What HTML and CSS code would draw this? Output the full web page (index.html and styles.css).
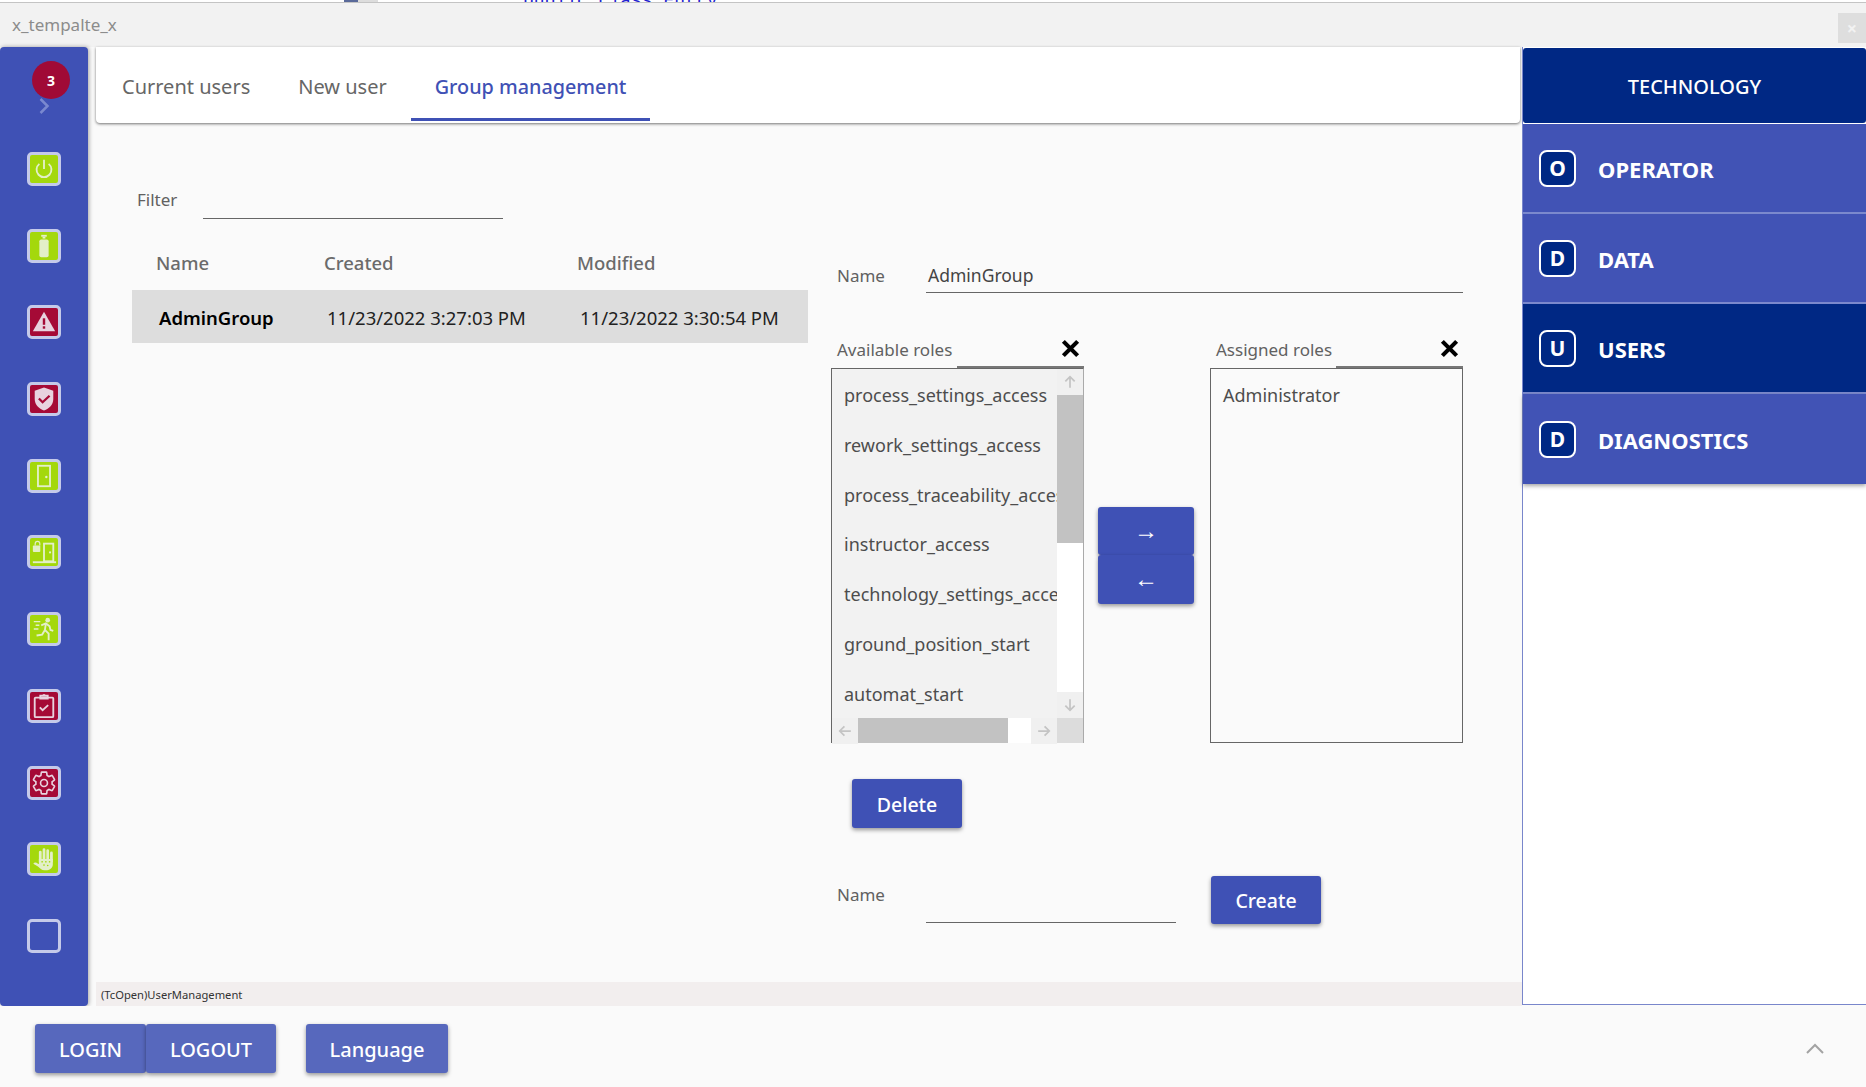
FILE: index.html
```html
<!DOCTYPE html>
<html lang="en">
<head>
  <meta charset="UTF-8" />
  <title>x_tempalte_x</title>
  <link rel="stylesheet" href="styles.css">
</head>
<body>
  <!-- Editor window peeking out behind the app -->
  <div class="behind-strip">
    <span class="behind-dark"></span><span class="behind-light"></span>
    <span class="behind-code">public class Entry</span>
  </div>

  <div class="title-bar">
    <span class="title-text">x_tempalte_x</span>
    <span class="close-btn">&times;</span>
  </div>

  <div class="workspace">
    <!-- Left icon rail -->
    <aside class="side-rail">
      <div class="alarm-badge">3</div>
      <svg class="rail-chevron" viewBox="0 0 14 18"><path d="M3.500 2l7 7-7 7" /></svg>
      <div class="rail-icons">
        <div class="rail-icon green">
          <svg viewBox="0 0 28 28" class="line"><path d="M9 8.500a8 8 0 1 0 10 0" /><path d="M14 4v10" /></svg>
        </div>
        <div class="rail-icon green">
          <svg viewBox="0 0 28 28" class="solid"><rect x="11" y="2" width="6" height="2" /><rect x="12.500" y="4" width="3" height="2" /><path d="M11 7h6a2 2 0 0 1 2 2v15a2 2 0 0 1-2 2h-6a2 2 0 0 1-2-2V9a2 2 0 0 1 2-2z" /></svg>
        </div>
        <div class="rail-icon red">
          <svg viewBox="0 0 28 28" class="solid"><path d="M14 3l12 21H2z" /><rect class="cut" x="12.700" y="10" width="2.600" height="7" /><rect class="cut" x="12.700" y="18.600" width="2.600" height="2.600" /></svg>
        </div>
        <div class="rail-icon red">
          <svg viewBox="0 0 28 28" class="solid"><path d="M14 1.500l10 3.500v9c0 6-4.500 10.500-10 12.500C8.500 24.500 4 20 4 14V5z" /><path class="cut-line" d="M8.500 13.500l4 4 7.500-7" /></svg>
        </div>
        <div class="rail-icon green">
          <svg viewBox="0 0 28 28" class="line"><rect x="7.500" y="3" width="13" height="22" /><circle class="knob" cx="16.500" cy="15" r="1.300" /></svg>
        </div>
        <div class="rail-icon green">
          <svg viewBox="0 0 28 28" class="line"><rect x="14" y="5" width="10" height="19" /><circle class="knob" cx="20.500" cy="14.500" r="1.200" /><path d="M2 25h25" /><path d="M4.500 7V5a2.500 2.500 0 0 1 5 0v2" stroke-width="1.300" /><rect class="knob" x="2" y="7" width="8" height="7" rx="1" /></svg>
        </div>
        <div class="rail-icon green">
          <svg viewBox="0 0 28 28" class="line"><circle class="knob" cx="18" cy="4.500" r="2.500" /><path d="M11 10l5-2 4 3 1 4 3 1M16 8l-1 7 4 4v7M15 15l-3 5-6 1" /><path d="M3 6h7M5 10h4M3 14h5" stroke-width="1.500" /></svg>
        </div>
        <div class="rail-icon red">
          <svg viewBox="0 0 28 28" class="line"><rect x="4" y="5" width="20" height="21" rx="1" /><path d="M10 5V3h3a1 1 0 0 1 2 0h3v3h-8z" /><path d="M9.500 15.500l3 3 6-5.500" /></svg>
        </div>
        <div class="rail-icon red">
          <svg viewBox="0 0 24 24" class="line thin"><path d="M19.430 12.980c.04-.32.07-.64.07-.98s-.03-.66-.07-.98l2.110-1.650c.19-.15.24-.42.12-.64l-2-3.460c-.12-.22-.39-.3-.61-.22l-2.490 1c-.52-.4-1.080-.73-1.690-.98l-.38-2.650C14.460 2.180 14.250 2 14 2h-4c-.25 0-.46.18-.49.42l-.38 2.650c-.61.25-1.170.59-1.690.98l-2.490-1c-.23-.09-.49 0-.61.22l-2 3.460c-.13.22-.07.49.12.64l2.110 1.650c-.04.32-.07.65-.07.98s.03.66.07.98l-2.110 1.650c-.19.15-.24.42-.12.64l2 3.460c.12.22.39.3.61.22l2.490-1c.52.4 1.080.73 1.690.98l.38 2.650c.03.24.24.42.49.42h4c.25 0 .46-.18.49-.42l.38-2.650c.61-.25 1.170-.59 1.690-.98l2.490 1c.23.09.49 0 .61-.22l2-3.460c.12-.22.07-.49-.12-.64z" /><circle cx="12" cy="12" r="3.200" /></svg>
        </div>
        <div class="rail-icon green">
          <svg viewBox="0 0 28 28" class="solid"><rect x="8.500" y="5" width="3" height="13" rx="1.500" /><rect x="12.500" y="2.500" width="3" height="15" rx="1.500" /><rect x="16.500" y="3.500" width="3" height="14" rx="1.500" /><rect x="20.500" y="6" width="3" height="12" rx="1.500" /><path d="M8.500 14h15v6c0 3-2.500 6-6 6h-3c-3 0-5-2-7-4l-5-3c1-1.500 3-1.500 5 0l1 .5z" /><circle class="cut" cx="12" cy="17" r=".9" /><circle class="cut" cx="16" cy="17" r=".9" /><circle class="cut" cx="20" cy="17" r=".9" /><circle class="cut" cx="14" cy="20.500" r=".9" /><circle class="cut" cx="18" cy="21" r=".9" /></svg>
        </div>
        <div class="rail-icon"></div>
      </div>
    </aside>

    <main class="main">
      <nav class="tabs">
        <div class="tab">Current users</div>
        <div class="tab">New user</div>
        <div class="tab active">Group management</div>
      </nav>

      <div class="content">
        <section class="groups">
          <div class="filter-row">
            <label class="field-label">Filter</label>
            <div class="line-input filter-input"></div>
          </div>
          <div class="group-head">
            <span>Name</span><span>Created</span><span>Modified</span>
          </div>
          <div class="group-row">
            <span class="group-name">AdminGroup</span>
            <span>11/23/2022 3:27:03 PM</span>
            <span>11/23/2022 3:30:54 PM</span>
          </div>
        </section>

        <section class="detail">
          <div class="name-row">
            <label class="field-label name-label">Name</label>
            <div class="line-input name-input">AdminGroup</div>
          </div>

          <div class="roles">
            <div class="role-col">
              <div class="role-head">
                <label class="field-label">Available roles</label>
                <div class="line-input role-search">
                  <svg class="clear-x" viewBox="0 0 16 16"><path d="M2 2l12 12M14 2L2 14" /></svg>
                </div>
              </div>
              <div class="role-list with-bars">
                <div class="role-items">
                  <div class="role-item">process_settings_access</div>
                  <div class="role-item">rework_settings_access</div>
                  <div class="role-item">process_traceability_access</div>
                  <div class="role-item">instructor_access</div>
                  <div class="role-item">technology_settings_access</div>
                  <div class="role-item">ground_position_start</div>
                  <div class="role-item">automat_start</div>
                </div>
                <div class="vbar">
                  <div class="bar-btn"><svg viewBox="0 0 12 12"><path d="M6 11V1.500M2 5.500l4-4 4 4" /></svg></div>
                  <div class="vthumb"></div>
                  <div class="bar-space"></div>
                  <div class="bar-btn"><svg viewBox="0 0 12 12"><path d="M6 1v9.500M2 6.500l4 4 4-4" /></svg></div>
                </div>
                <div class="hbar">
                  <div class="bar-btn"><svg viewBox="0 0 12 12"><path d="M11 6H1.500M5.500 2l-4 4 4 4" /></svg></div>
                  <div class="hthumb"></div>
                  <div class="bar-space"></div>
                  <div class="bar-btn"><svg viewBox="0 0 12 12"><path d="M1 6h9.500M6.500 2l4 4-4 4" /></svg></div>
                </div>
                <div class="bar-corner"></div>
              </div>
            </div>

            <div class="move-btns">
              <button class="btn move-btn">&rarr;</button>
              <button class="btn move-btn">&larr;</button>
            </div>

            <div class="role-col">
              <div class="role-head">
                <label class="field-label">Assigned roles</label>
                <div class="line-input role-search">
                  <svg class="clear-x" viewBox="0 0 16 16"><path d="M2 2l12 12M14 2L2 14" /></svg>
                </div>
              </div>
              <div class="role-list">
                <div class="role-item assigned">Administrator</div>
              </div>
            </div>
          </div>

          <button class="btn delete-btn">Delete</button>

          <div class="create-row">
            <label class="field-label name-label">Name</label>
            <div class="line-input create-input"></div>
            <button class="btn create-btn">Create</button>
          </div>
        </section>
      </div>

      <div class="status-bar">(TcOpen)UserManagement</div>
    </main>

    <!-- Right navigation -->
    <aside class="nav-panel">
      <div class="nav-title">TECHNOLOGY</div>
      <div class="nav-item"><span class="nav-key">O</span>OPERATOR</div>
      <div class="nav-item"><span class="nav-key">D</span>DATA</div>
      <div class="nav-item current"><span class="nav-key">U</span>USERS</div>
      <div class="nav-item"><span class="nav-key">D</span>DIAGNOSTICS</div>
    </aside>
  </div>

  <footer class="bottom-bar">
    <button class="btn soft login-btn">LOGIN</button>
    <button class="btn soft logout-btn">LOGOUT</button>
    <button class="btn soft lang-btn">Language</button>
    <svg class="collapse" viewBox="0 0 20 12"><path d="M2 10l8-8 8 8" /></svg>
  </footer>
</body>
</html>
```

FILE: styles.css
```css
* {
  box-sizing: border-box;
}

html, body {
  height: 100%;
}

body {
  margin: 0;
  display: flex;
  flex-direction: column;
  overflow: hidden;
  background-color: #fafafa;
  font-family: "Noto Sans", sans-serif;
  font-size: 19px;
  color: #616161;
}

/* window chrome */
.behind-strip {
  height: 3px;
  flex: none;
  display: flex;
  align-items: flex-end;
  overflow: hidden;
  background-color: #fff;
  border-bottom: 1px solid #c4c4c4;
}

.behind-dark {
  width: 14px;
  height: 3px;
  margin-left: 344px;
  background-color: #5a6a9a;
}

.behind-light {
  width: 20px;
  height: 3px;
  background-color: #ddd;
}

.behind-code {
  margin-left: 145px;
  margin-bottom: -9px;
  font-family: "Liberation Mono", monospace;
  font-size: 18px;
  line-height: 20px;
  color: #2020d0;
}

.title-bar {
  height: 44px;
  flex: none;
  display: flex;
  align-items: center;
  justify-content: space-between;
  background-color: #f2f2f2;
}

.title-text {
  margin-left: 12px;
  margin-top: -2px;
  font-size: 17px;
  color: #8c8c8c;
}

.close-btn {
  width: 28px;
  height: 30px;
  margin-top: 6px;
  display: flex;
  align-items: center;
  justify-content: center;
  background-color: #dedede;
  color: #f2f2f2;
  font-size: 18px;
  font-weight: 700;
}

.workspace {
  flex: 1;
  display: flex;
  min-height: 0;
}

/* left rail */
.side-rail {
  width: 88px;
  flex: none;
  display: flex;
  flex-direction: column;
  align-items: center;
  padding-top: 14px;
  background-color: #3f51b5;
  border-radius: 4px;
  box-shadow: 1px 0 4px rgba(0, 0, 0, 0.35);
}

.alarm-badge {
  width: 38px;
  height: 38px;
  margin-left: 14px;
  display: flex;
  align-items: center;
  justify-content: center;
  border-radius: 50%;
  background-color: #a00a36;
  color: #fff;
  font-size: 14px;
  font-weight: 700;
}

.rail-chevron {
  width: 14px;
  height: 18px;
  margin-top: -2px;
}

.rail-chevron path {
  fill: none;
  stroke: #7a88cf;
  stroke-width: 2.500;
}

.rail-icons {
  display: flex;
  flex-direction: column;
  gap: 42.7px;
  margin-top: 37px;
}

.rail-icon {
  width: 34px;
  height: 34px;
  display: flex;
  align-items: center;
  justify-content: center;
  border: 3px solid #c5cae9;
  border-radius: 5px;
}

.rail-icon.green {
  background-color: #a4d80c;
  --ink: #e3efc8;
  --cut: #a4d80c;
}

.rail-icon.red {
  background-color: #a50a36;
  --ink: #e8d3df;
  --cut: #a50a36;
}

.rail-icon svg {
  width: 26px;
  height: 26px;
}

.line {
  fill: none;
  stroke: var(--ink);
  stroke-width: 2;
}

.line.thin {
  stroke-width: 1.500;
}

.line .knob {
  fill: var(--ink);
  stroke: none;
}

.solid {
  fill: var(--ink);
}

.solid .cut {
  fill: var(--cut);
}

.solid .cut-line {
  fill: none;
  stroke: var(--cut);
  stroke-width: 2.500;
}

/* main area */
.main {
  flex: 1;
  min-width: 0;
  margin-left: 8px;
  display: flex;
  flex-direction: column;
}

.tabs {
  height: 76px;
  flex: none;
  display: flex;
  margin-right: 2px;
  padding: 0 2px 2px;
  background-color: #fff;
  border-radius: 0 0 4px 4px;
  box-shadow: 0 1px 3px rgba(0, 0, 0, 0.55);
}

.tab {
  display: flex;
  align-items: center;
  padding: 4px 24px 0;
  font-size: 20px;
  color: #666;
}

.tab.active {
  padding-top: 7px;
  font-size: 19.800px;
  color: #3f51b5;
  font-weight: 500;
  border-bottom: 3px solid #3f51b5;
}

.content {
  flex: 1;
  display: flex;
  gap: 23px;
  padding-left: 36px;
}

.groups {
  width: 676px;
  flex: none;
}

.field-label {
  font-size: 17px;
  color: #616161;
}

.line-input {
  height: 36px;
  padding-left: 2px;
  border-bottom: 1px solid #666;
  font-size: 17.500px;
  line-height: 36px;
  color: #444;
}

.filter-row {
  display: flex;
  align-items: flex-end;
  margin-top: 60px;
  padding-left: 5px;
}

.filter-row .field-label {
  width: 66px;
  margin-bottom: 8px;
}

.filter-input {
  width: 300px;
}

.group-head,
.group-row {
  display: grid;
  grid-template-columns: 168px 253px 1fr;
  align-items: center;
  font-size: 18.500px;
}

.group-head {
  height: 40px;
  margin-top: 23px;
  padding-left: 24px;
  font-weight: 500;
  color: #6b6b6b;
}

.group-row {
  height: 53px;
  margin-top: 8px;
  padding: 1px 0 0 27px;
  background-color: #ddd;
  color: #222;
}

.group-name {
  font-weight: 600;
  color: #000;
}

.detail {
  width: 632px;
  flex: none;
}

.name-row {
  display: flex;
  align-items: flex-end;
  margin-top: 134px;
}

.name-label {
  width: 95px;
  padding-left: 6px;
  margin-bottom: 6px;
}

.name-input {
  width: 537px;
}

.roles {
  display: flex;
  margin-top: 37px;
}

.role-col {
  width: 253px;
  flex: none;
}

.role-head {
  display: flex;
  justify-content: space-between;
  align-items: flex-end;
  height: 38px;
  padding-left: 6px;
}

.role-head .field-label {
  margin-bottom: 7px;
}

.role-search {
  position: relative;
  width: 127px;
  border-bottom: 2px solid #777;
}

.clear-x {
  position: absolute;
  right: 4px;
  top: 7px;
  width: 19px;
  height: 19px;
  fill: none;
  stroke: #000;
  stroke-width: 3.500;
}

.role-list {
  height: 375px;
  padding-top: 2px;
  border: 1px solid #666;
  border-bottom-color: #666;
}

.role-list.with-bars {
  display: grid;
  grid-template-columns: 1fr 26px;
  grid-template-rows: 1fr 25px;
  padding: 0;
  border-bottom: none;
  border-right-color: #aaa;
}

.role-items {
  overflow: hidden;
  padding-top: 2px;
  background-color: #f2f2f2;
}

.role-item {
  height: 49.800px;
  padding-left: 12px;
  font-size: 18px;
  line-height: 49.800px;
  white-space: nowrap;
  color: #4d4d4d;
}

.vbar {
  display: flex;
  flex-direction: column;
  background-color: #fff;
}

.hbar {
  display: flex;
  background-color: #fff;
}

.bar-btn {
  width: 26px;
  height: 26px;
  flex: none;
  display: flex;
  align-items: center;
  justify-content: center;
  background-color: #f0f0f0;
}

.bar-btn svg {
  width: 14px;
  height: 14px;
  fill: none;
  stroke: #c4c4c4;
  stroke-width: 1.500;
}

.vthumb {
  height: 148px;
  flex: none;
  background-color: #c2c2c2;
}

.hthumb {
  width: 150px;
  flex: none;
  background-color: #c2c2c2;
}

.bar-space {
  flex: 1;
}

.bar-corner {
  background-color: #dcdcdc;
}

.move-btns {
  width: 126px;
  flex: none;
  display: flex;
  flex-direction: column;
  justify-content: center;
  align-items: center;
  padding: 37px 2px 0 0;
}

.btn {
  border: none;
  border-radius: 3px;
  background-color: #3f51b5;
  color: #fff;
  font-family: "Noto Sans", sans-serif;
  font-weight: 500;
  box-shadow: 0 2px 4px rgba(0, 0, 0, 0.4);
}

.move-btn {
  width: 96px;
  height: 48.500px;
  padding: 0;
  font-family: "Liberation Sans", sans-serif;
  font-size: 24px;
  line-height: 24px;
  font-weight: 400;
}

.delete-btn {
  display: block;
  width: 110px;
  height: 49px;
  margin: 36px 0 0 21px;
  padding-top: 2px;
  font-size: 19.500px;
}

.create-row {
  display: flex;
  align-items: flex-end;
  margin-top: 48px;
}

.create-input {
  width: 250px;
  height: 47px;
}

.create-btn {
  width: 110px;
  height: 48px;
  margin: 0 0 -1px 35px;
  font-size: 19.500px;
}

.create-row .name-label {
  margin-bottom: 17px;
}

.status-bar {
  height: 24px;
  flex: none;
  padding-left: 5px;
  background-color: #f2eeee;
  font-size: 11.200px;
  line-height: 26px;
  color: #333;
}

/* right nav */
.nav-panel {
  width: 344px;
  flex: none;
  padding-top: 1px;
  background-color: #fff;
  border-left: 1px solid #7986cb;
  border-bottom: 1px solid #7986cb;
  margin-bottom: 1px;
}

.nav-title {
  height: 75px;
  margin-bottom: 1px;
  padding-top: 2px;
  display: flex;
  align-items: center;
  justify-content: center;
  background-color: #002884;
  border-radius: 3px;
  color: #fff;
  font-size: 20px;
  font-weight: 500;
}

.nav-item {
  height: 90px;
  display: flex;
  align-items: center;
  padding: 2px 0 0 16px;
  background-color: #4153b5;
  border-bottom: 2px solid #7b89cd;
  color: #fff;
  font-size: 22px;
  font-weight: 700;
}

.nav-item:last-child {
  border-bottom: none;
  box-shadow: 0 2px 4px rgba(0, 0, 0, 0.35);
}

.nav-item.current {
  background-color: #002884;
}

.nav-key {
  width: 37px;
  height: 37px;
  margin: -2px 22px 0 0;
  display: flex;
  align-items: center;
  justify-content: center;
  background-color: #002884;
  border: 2.500px solid #fff;
  border-radius: 8px;
  font-size: 21px;
}

/* bottom bar */
.bottom-bar {
  height: 81px;
  flex: none;
  display: flex;
  align-items: center;
  padding: 4px 41px 0 35px;
  background-color: #fafafa;
}

.soft {
  height: 49px;
  padding-top: 2px;
  background-color: #5768bd;
  font-size: 20px;
}

.login-btn {
  width: 111px;
}

.logout-btn {
  width: 130px;
}

.lang-btn {
  width: 142px;
  margin-left: 30px;
}

.collapse {
  width: 20px;
  height: 12px;
  margin-left: auto;
  fill: none;
  stroke: #a3a3a3;
  stroke-width: 2;
}
```
